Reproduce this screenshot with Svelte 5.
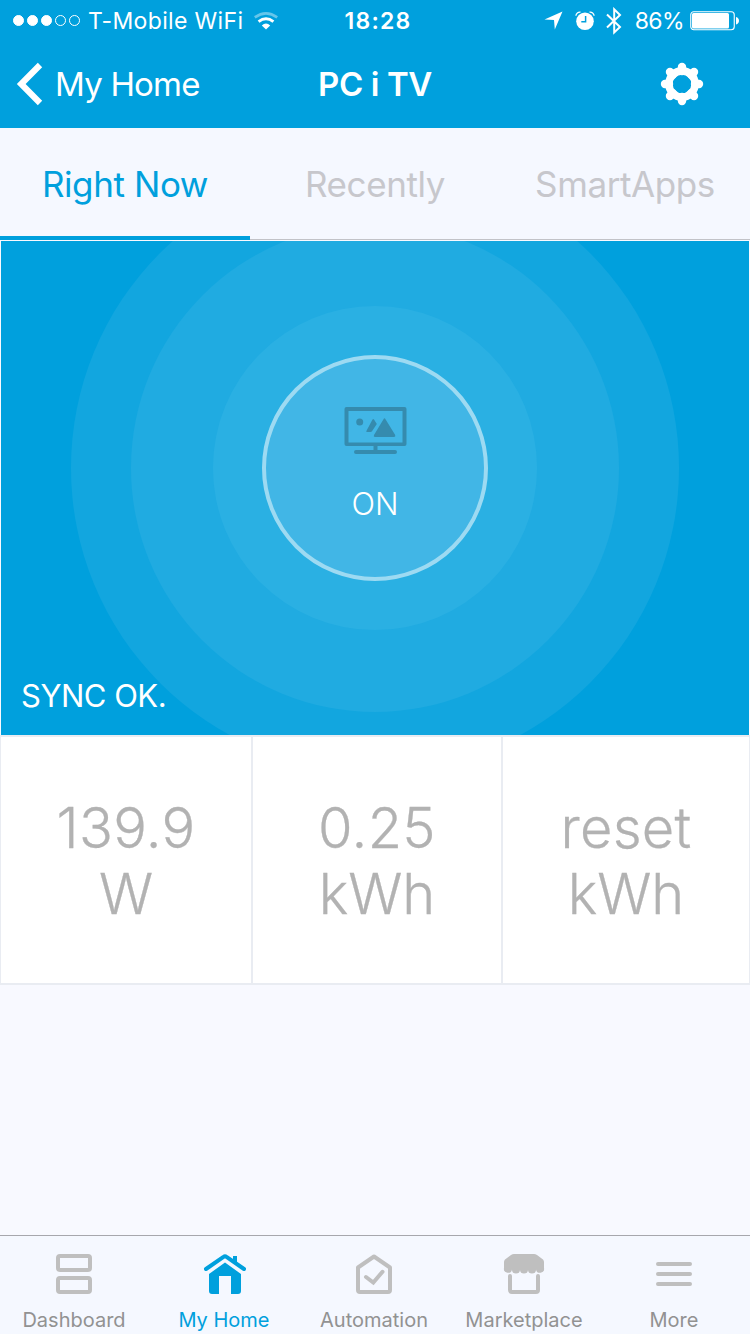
<script lang="ts">
  const tabs = ["Right Now", "Recently", "SmartApps"];
  let activeTab = $state("Right Now");

  const readings = [
    { value: "139.9", unit: "W" },
    { value: "0.25", unit: "kWh" },
    { value: "reset", unit: "kWh" },
  ];

  const menu = ["Dashboard", "My Home", "Automation", "Marketplace", "More"];
  let activeMenu = $state("My Home");

  const signal = [true, true, true, false, false];
  const ripples = ["outer", "middle", "inner"];
  const gearTeeth = [0, 45, 90, 135, 180, 225, 270, 315];
</script>

<div class="screen">
  <header>
    <div class="status">
      <div class="carrier">
        <div class="signal">
          {#each signal as on}
            <span class={{ dot: true, on }}></span>
          {/each}
        </div>
        <span class="network">T-Mobile WiFi</span>
        <svg class="wifi" width="24" height="18" viewBox="0 0 24 18">
          <path d="M.8 5.4 Q12 -2.6 23.2 5.4" fill="none" stroke="#fff" stroke-width="2.6" opacity=".4" />
          <path d="M4.6 9.6 Q12 4 19.4 9.6" fill="none" stroke="#fff" stroke-width="3" />
          <path d="M7.8 13.4 Q12 9.4 16.2 13.4 L12 17.6Z" fill="#fff" />
        </svg>
      </div>
      <div class="time">18:28</div>
      <div class="indicators">
        <svg class="location" width="19" height="19" viewBox="0 0 19 19">
          <path d="M18.5 .5 L10.8 18.5 L10 9 L.5 8.4Z" fill="#fff" />
        </svg>
        <svg class="alarm" width="20" height="20" viewBox="0 0 20 20">
          <circle cx="10" cy="10.3" r="8.8" fill="#fff" />
          <path d="M.9 4.8 A4 4 0 0 1 5.5 1.1 M19.1 4.8 A4 4 0 0 0 14.5 1.1" fill="none" stroke="#fff" stroke-width="1.3" />
          <path d="M10.6 5 V10.8 H6.3" fill="none" stroke="#00a0dd" stroke-width="1.5" />
        </svg>
        <svg class="bluetooth" width="16" height="28" viewBox="0 0 16 28">
          <path d="M1 7.5 L14 20 L8.2 25.5 V2.3 L14 8 L1 20.5" fill="none" stroke="#fff" stroke-width="2" />
        </svg>
        <span class="percent">86%</span>
        <svg class="battery" width="50" height="20" viewBox="0 0 50 20">
          <rect x=".75" y=".75" width="43.5" height="18" rx="3" fill="none" stroke="#fff" stroke-width="1.1" />
          <rect x="2" y="2" width="37" height="15.5" rx="1.5" fill="#fff" />
          <path d="M46 6 Q49 7 49 9.7 Q49 12.5 46 13.5Z" fill="#fff" />
        </svg>
      </div>
    </div>
    <nav>
      <button class="back">
        <svg width="28" height="44" viewBox="0 0 28 44">
          <path d="M24 3 L5.2 22 L24 41" fill="none" stroke="#fff" stroke-width="6.2" />
        </svg>
        <span>My Home</span>
      </button>
      <h1>PC i TV</h1>
      <button class="settings" aria-label="Settings">
        <svg width="44" height="44" viewBox="-22 -22 44 44">
          {#each gearTeeth as angle}
            <path d="M0 -17 V-13" transform="rotate({angle})" stroke="#fff" stroke-width="8.4" stroke-linecap="round" />
          {/each}
          <circle r="13.1" fill="none" stroke="#fff" stroke-width="7.6" />
        </svg>
      </button>
    </nav>
  </header>

  <div class="tabs">
    {#each tabs as tab}
      <button class={{ tab: true, active: activeTab === tab }} onclick={() => (activeTab = tab)}>
        <span>{tab}</span>
      </button>
    {/each}
  </div>

  <main>
    <section class="panel">
      {#each ripples as ripple}
        <div class={["ripple", ripple]}></div>
      {/each}
      <button class="switch">
        <svg width="64" height="48" viewBox="-1.5 0 64 48">
          <g fill="#358bae">
            <path d="M2 0 H60 Q62 0 62 2 V37 Q62 39 60 39 H33 V43 H50.5 A2 2 0 0 1 50.5 47 H11.5 A2 2 0 0 1 11.5 43 H29 V39 H2 Q0 39 0 37 V2 Q0 0 2 0Z M4 4 V35.5 H58 V4Z" fill-rule="evenodd" />
            <circle cx="15.2" cy="15" r="3.5" />
            <path d="M39 12.2 Q40 10.3 41 12.2 L50.7 28 Q51.3 30 49.5 30 H30.5 Q28.7 30 29.5 28Z" />
            <path d="M28 12.5 Q28.8 11.5 29.5 12.5 L32.3 17 L27.5 24.3 Q27 25 26 25 H22.5 Q21.2 25 22 23.7Z" />
          </g>
        </svg>
        <span>ON</span>
      </button>
      <div class="sync">SYNC OK.</div>
    </section>

    <section class="readings">
      {#each readings as reading}
        <div class="reading">
          <span class="value">{reading.value}</span>
          <span>{reading.unit}</span>
        </div>
      {/each}
    </section>
  </main>

  <footer>
    {#each menu as item}
      <button class={{ item: true, active: activeMenu === item }} onclick={() => (activeMenu = item)}>
        <svg width="44" height="44" viewBox="0 0 44 44" fill="none" stroke="currentColor" stroke-width="4">
          {#if item === "Dashboard"}
            <rect x="6" y="4" width="32" height="14" rx="2" />
            <rect x="6" y="26" width="32" height="14" rx="2" />
          {:else if item === "My Home"}
            <g transform="translate(1 0)">
              <path d="M3 17 L20.5 4.9 Q22 3.8 23.5 4.9 L41 17" stroke-linecap="round" />
              <path d="M30 4 H34 V12.5 L30 9.5Z" fill="currentColor" stroke="none" />
              <path d="M22 10.5 L38 22 V39 Q38 42 35 42 H28 V24 H16 V42 H9 Q6 42 6 39 V22Z" fill="currentColor" stroke="none" />
            </g>
          {:else if item === "Automation"}
            <path d="M22 4.5 L38 15.5 V38 Q38 40 36 40 H8 Q6 40 6 38 V15.5Z" stroke-linejoin="round" />
            <path d="M14 25 L21.3 30.5 L30.5 19.8" stroke-linecap="round" />
          {:else if item === "Marketplace"}
            <path d="M12 2 H32 Q33.5 2 35 3 L41 7.5 Q42 8.5 42 10 V16 A4 4 0 0 1 34 17.5 A4 4 0 0 1 26 17.5 A4 4 0 0 1 18 17.5 A4 4 0 0 1 10 17.5 A4 4 0 0 1 2 16 V10 Q2 8.5 3 7.5 L9 3 Q10.5 2 12 2Z" fill="currentColor" stroke="none" />
            <path d="M8 24 V38 Q8 40 10 40 H34 Q36 40 36 38 V24" stroke-linecap="round" />
          {:else}
            <path d="M6 12 H38 M6 22 H38 M6 32 H38" stroke-linecap="round" />
          {/if}
        </svg>
        <span>{item}</span>
      </button>
    {/each}
  </footer>
</div>

<style>
  :global(body) {
    margin: 0;
  }

  .screen {
    display: flex;
    flex-direction: column;
    width: 750px;
    height: 1334px;
    overflow: hidden;
    background-color: #f8f9ff;
    font-family: Inter, "Liberation Sans", sans-serif;
    font-weight: 400;
  }

  svg {
    display: block;
    flex: none;
  }

  button {
    margin: 0;
    padding: 0;
    border: 0;
    background: none;
    color: inherit;
    font: inherit;
    letter-spacing: inherit;
    white-space: nowrap;
    cursor: pointer;
  }

  header {
    flex: none;
    height: 128px;
    background-color: #00a0dd;
    color: #fff;
  }

  .status {
    display: grid;
    grid-template-columns: 1fr auto 1fr;
    align-items: center;
    box-sizing: border-box;
    height: 41px;
    padding: 0 10px 0 13px;
    font-size: 23px;
    line-height: 39px;
  }

  .carrier,
  .indicators {
    display: flex;
    align-items: center;
    white-space: nowrap;
  }

  .signal {
    display: flex;
    gap: 3px;
    margin-right: 8px;
  }

  .dot {
    box-sizing: border-box;
    width: 11px;
    height: 11px;
    border: 1px solid #fff;
    border-radius: 50%;

    &.on {
      background-color: #fff;
    }
  }

  .network,
  .time,
  .percent {
    padding-top: 2px;
  }

  .network {
    letter-spacing: 0.35px;
  }

  .wifi {
    margin-left: 11px;
  }

  .time {
    padding-left: 3px;
    font-weight: 600;
    letter-spacing: 1.2px;
  }

  .indicators {
    justify-content: flex-end;
  }

  .alarm {
    margin-left: 12px;
  }

  .bluetooth {
    margin: 0 13px 0 11px;
  }

  .percent {
    letter-spacing: -0.6px;
  }

  .battery {
    margin-left: 6px;
  }

  nav {
    display: grid;
    grid-template-columns: 1fr auto 1fr;
    align-items: center;
    height: 86px;
    padding: 0 16px;
    font-size: 33px;
  }

  .back {
    display: flex;
    align-items: center;
    gap: 11px;
    letter-spacing: -0.8px;
  }

  h1 {
    margin: 0;
    font-size: 33px;
    font-weight: 600;
    letter-spacing: -0.4px;
  }

  .settings {
    justify-self: end;
    margin-right: 30px;
  }

  .tabs {
    display: flex;
    flex: none;
    box-sizing: border-box;
    height: 112px;
    background-color: #f5f8ff;
    box-shadow: inset 0 -1px #c2c3c8;
  }

  .tab {
    flex: 1;
    border-bottom: 4px solid transparent;
    padding-top: 4px;
    color: #c7c7cc;
    font-size: 35px;
    letter-spacing: -0.4px;

    &.active {
      border-color: #00a0dd;
      color: #00a0dd;
    }
  }

  main {
    flex: 1;
  }

  .panel {
    position: relative;
    display: flex;
    justify-content: center;
    height: 494px;
    margin: 1px 1px 0;
    overflow: hidden;
    background-color: #00a0dd;
    color: #fff;
    font-size: 31px;
  }

  /* rings share the centre of the switch */
  .ripple {
    position: absolute;
    top: 227px;
    left: 50%;
    aspect-ratio: 1;
    border-radius: 50%;
    transform: translate(-50%, -50%);

    &.outer {
      width: 608px;
      background-color: #12a6df;
    }

    &.middle {
      width: 488px;
      background-color: #20abe1;
    }

    &.inner {
      width: 324px;
      background-color: #2ab0e3;
    }
  }

  .switch {
    position: relative;
    display: flex;
    flex-direction: column;
    align-items: center;
    align-self: flex-start;
    box-sizing: border-box;
    width: 226px;
    height: 226px;
    margin-top: 114px;
    padding-top: 48px;
    border: 4px solid #9ddaf2;
    border-radius: 50%;
    background-color: #41b6e6;
    font-weight: 300;

    span {
      margin-top: 29px;
      line-height: 40px;
    }
  }

  .sync {
    position: absolute;
    bottom: 19px;
    left: 20px;
    letter-spacing: -0.5px;
    line-height: 40px;
  }

  .readings {
    display: grid;
    grid-template-columns: 250px 248px 246px;
    gap: 2px;
    box-sizing: border-box;
    height: 250px;
    padding: 2px 1px;
    background-color: #e9ecf2;
  }

  .reading {
    display: flex;
    flex-direction: column;
    align-items: center;
    padding-top: 58px;
    background-color: #fff;
    color: #b2b2b2;
    font-size: 56px;
    font-weight: 300;
    line-height: 66px;
    -webkit-text-stroke: 0.3px #b2b2b2;
  }

  .value {
    letter-spacing: 0.3px;
  }

  footer {
    display: flex;
    flex: none;
    box-sizing: border-box;
    height: 99px;
    border-top: 1px solid #a7a7ad;
    background-color: #f5f8ff;
  }

  .item {
    display: flex;
    flex: 1;
    flex-direction: column;
    align-items: center;
    padding: 16px 2px 0 0;
    color: #bfbfbf;
    font-size: 20px;
    line-height: 24px;

    span {
      margin-top: 12px;
      color: #929292;
    }

    &.active,
    &.active span {
      color: #00a0dd;
    }
  }
</style>
